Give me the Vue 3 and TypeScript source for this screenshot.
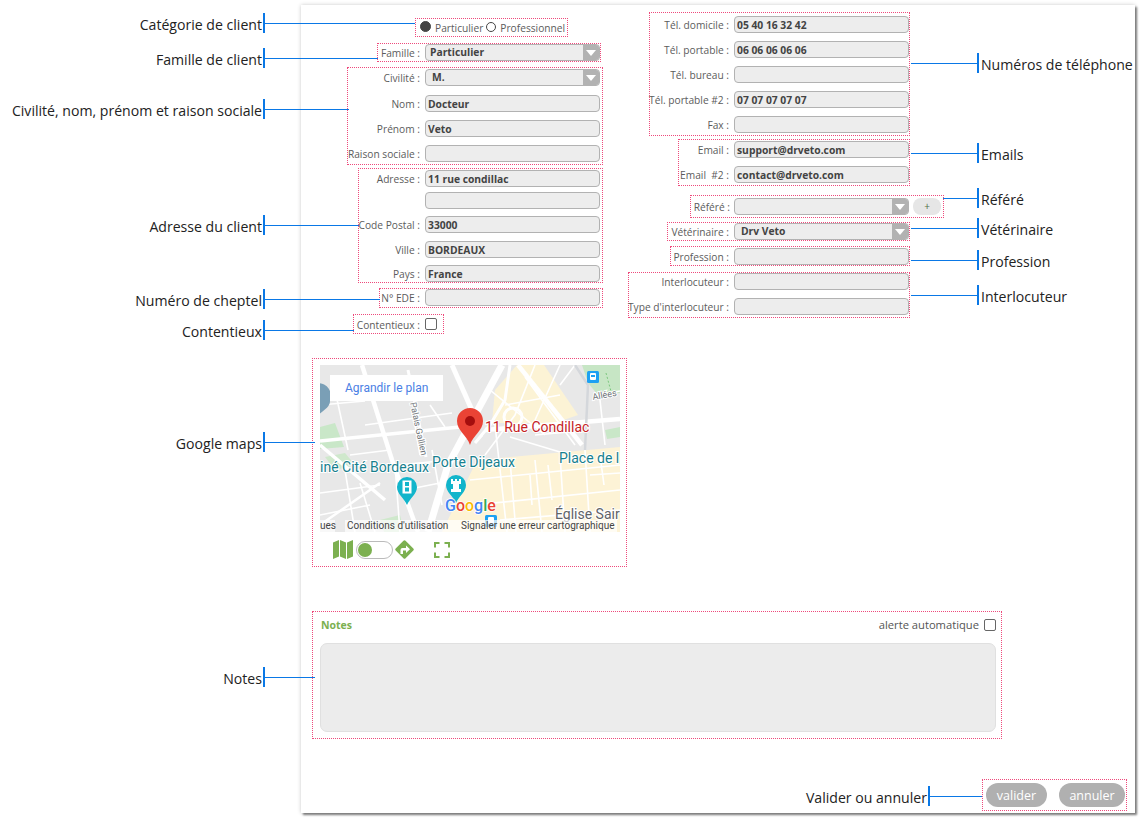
<script setup lang="ts">
interface Row {
  label: string
  value: string
  kind: 'input' | 'select'
  gap?: number
  addon?: boolean
}
interface Group {
  cls: string
  rows: Row[]
}
interface Callout {
  text: string
  y: number
  line: number
  side: 'left' | 'right'
  start?: number
}

const input = (label: string, value = '', gap = 0): Row => ({ label, value, kind: 'input', gap })
const select = (label: string, value = '', gap = 0, addon = false): Row => ({ label, value, kind: 'select', gap, addon })

const leftGroups: Group[] = [
  { cls: 'g-famille', rows: [select('Famille :', 'Particulier')] },
  {
    cls: 'g-civilite',
    rows: [select('Civilité :', 'M.'), input('Nom :', 'Docteur', 9), input('Prénom :', 'Veto', 8), input('Raison sociale :', '', 8)],
  },
  {
    cls: 'g-adresse',
    rows: [
      input('Adresse :', '11 rue condillac'),
      input('', '', 5),
      input('Code Postal :', '33000', 7),
      input('Ville :', 'BORDEAUX', 8),
      input('Pays :', 'France', 7),
    ],
  },
  { cls: 'g-ede', rows: [input('N° EDE :')] },
]

const rightGroups: Group[] = [
  {
    cls: 'g-tel',
    rows: [
      input('Tél. domicile :', '05 40 16 32 42'),
      input('Tél. portable :', '06 06 06 06 06', 8),
      input('Tél. bureau :', '', 8),
      input('Tél. portable #2 :', '07 07 07 07 07', 8),
      input('Fax :', '', 8),
    ],
  },
  { cls: 'g-email', rows: [input('Email :', 'support@drveto.com'), input('Email  #2 :', 'contact@drveto.com', 8)] },
  { cls: 'g-refere', rows: [select('Référé :', '', 0, true)] },
  { cls: 'g-veto', rows: [select('Vétérinaire :', 'Drv Veto')] },
  { cls: 'g-profession', rows: [input('Profession :')] },
  { cls: 'g-interlocuteur', rows: [input('Interlocuteur :'), input("Type d'interlocuteur :", '', 8)] },
]

const callouts: Callout[] = [
  { text: 'Catégorie de client', y: 23, line: 150, side: 'left' },
  { text: 'Famille de client', y: 58, line: 113, side: 'left' },
  { text: 'Civilité, nom, prénom et raison sociale', y: 109, line: 84, side: 'left' },
  { text: 'Adresse du client', y: 225, line: 94, side: 'left' },
  { text: 'Numéro de cheptel', y: 299, line: 115, side: 'left' },
  { text: 'Contentieux', y: 330, line: 89, side: 'left' },
  { text: 'Google maps', y: 442, line: 50, side: 'left' },
  { text: 'Notes', y: 677, line: 50, side: 'left' },
  { text: 'Numéros de téléphone', y: 63, line: 66, side: 'right', start: 911 },
  { text: 'Emails', y: 153, line: 66, side: 'right', start: 911 },
  { text: 'Référé', y: 198, line: 34, side: 'right', start: 943 },
  { text: 'Vétérinaire', y: 228, line: 66, side: 'right', start: 911 },
  { text: 'Profession', y: 260, line: 66, side: 'right', start: 911 },
  { text: 'Interlocuteur', y: 295, line: 66, side: 'right', start: 911 },
]

const calloutStyle = (c: Callout) =>
  c.side === 'left' ? { top: `${c.y - 10}px`, left: '0' } : { top: `${c.y - 10}px`, left: `${c.start}px` }
</script>

<template>
  <div class="page">
    <div class="sheet">
      <div class="columns">
        <div class="col col-left">
          <div class="group g-radio">
            <span class="radio checked"></span><span class="radio-label">Particulier</span>
            <span class="radio"></span><span class="radio-label">Professionnel</span>
          </div>

          <div v-for="g in leftGroups" :key="g.cls" class="group grid" :class="g.cls">
            <template v-for="(r, i) in g.rows" :key="i">
              <label :style="{ marginTop: `${r.gap}px` }">{{ r.label }}</label>
              <div v-if="r.kind === 'select'" class="select" :style="{ marginTop: `${r.gap}px` }">
                <span>{{ r.value }}</span><i class="arrow"></i>
              </div>
              <input v-else class="field" readonly :value="r.value" :style="{ marginTop: `${r.gap}px` }" />
            </template>
          </div>

          <div class="group grid g-contentieux">
            <label>Contentieux :</label>
            <input type="checkbox" class="check" />
          </div>
        </div>

        <div class="col col-right">
          <div v-for="g in rightGroups" :key="g.cls" class="group grid" :class="g.cls">
            <template v-for="(r, i) in g.rows" :key="i">
              <label :style="{ marginTop: `${r.gap}px` }">{{ r.label }}</label>
              <div v-if="r.kind === 'select'" class="select" :style="{ marginTop: `${r.gap}px` }">
                <span>{{ r.value }}</span><i class="arrow"></i>
              </div>
              <input v-else class="field" readonly :value="r.value" :style="{ marginTop: `${r.gap}px` }" />
              <button v-if="r.addon" class="add">+</button>
            </template>
          </div>
        </div>
      </div>

      <div class="group map-box">
        <svg class="map" width="300" height="167" viewBox="0 0 300 167">
          <rect width="300" height="167" fill="#e8e8e8" />
          <!-- quartiers jaunes -->
          <path d="M197 0 L224 0 L258 50 L235 58 L172 58 L175 25 Z" fill="#fcf3d5" />
          <path d="M157 95 L300 82 L300 167 L122 167 L140 130 Z" fill="#fdf3d6" />
          <!-- espaces verts -->
          <path d="M262 0 L300 0 L300 28 L278 30 L268 18 Z" fill="#c7e6c5" />
          <path d="M0 62 L15 58 L24 82 L0 84 Z" fill="#c9e7c8" />
          <path d="M5 92 L25 88 L35 100 L15 105 Z" fill="#cfe8cc" />
          <path d="M60 155 L80 150 L84 167 L64 167 Z" fill="#cfe8cc" />
          <path d="M285 65 L300 62 L300 72 L287 74 Z" fill="#c9e7c8" />
          <!-- petites rues -->
          <g fill="none" stroke="#fff" stroke-width="1.6">
            <path d="M0 40 L45 36 M15 25 L28 85 M45 60 L132 48 M60 30 L90 25 M85 35 L120 32 M110 40 L125 62" />
            <path d="M0 128 L60 120 M0 150 L50 140 M25 105 L35 167 M40 118 L55 167 M75 100 L80 167" />
            <path d="M85 125 L120 118 M112 85 L122 140 M95 60 L100 90 M30 90 L70 85 M78 100 L120 96" />
            <path d="M215 0 L195 50 L165 90 M240 0 L215 55 M185 40 L240 30 M170 25 L225 70 M205 12 L255 80" />
            <path d="M175 60 L187 167 M190 95 L196 167 M215 95 L222 167 M240 90 L245 167 M265 85 L270 167 M255 0 L240 20" />
            <path d="M150 115 L300 100 M155 140 L300 125 M180 155 L300 145 M210 110 L212 140 M228 100 L232 135 M280 90 L284 120" />
            <path d="M275 30 L300 26 M280 35 L285 80 M270 110 L300 108 M215 70 L260 66 M190 72 L250 90" />
          </g>
          <!-- grands axes -->
          <g fill="none" stroke="#fff">
            <path d="M182 0 L128 100 L108 167" stroke-width="7" />
            <path d="M132 0 L155 52" stroke-width="5" />
            <path d="M42 0 L72 95 L98 167" stroke-width="4.5" />
            <path d="M0 76 L140 62" stroke-width="3.5" />
            <path d="M165 65 L300 54" stroke-width="4.5" />
            <path d="M88 5 L106 92" stroke-width="3" />
            <path d="M0 80 L65 135" stroke-width="3.5" />
            <path d="M0 160 L60 118" stroke-width="2.5" />
            <path d="M198 0 L262 80" stroke-width="4.5" />
            <path d="M162 70 L155 78 L170 60 L185 35 L190 0" stroke-width="3" />
            <circle cx="193" cy="52" r="9" stroke-width="3" />
          </g>
          <path d="M255 0 L268 20 L265 85" fill="none" stroke="#d4d7db" stroke-width="2.5" />
          <path d="M286 8 L292 30" fill="none" stroke="#7bc77e" stroke-width="1" stroke-dasharray="2 2" />

          <!-- repères -->
          <path d="M-14 36 A13 13 0 1 1 10 36 C10 42 4 45 -2 50 C-8 45 -14 42 -14 36 Z" fill="#7a9fb6" />
          <g>
            <path d="M77 122 A10 10 0 1 1 97 122 C97 129 90 133 87 140 C84 133 77 129 77 122 Z" fill="#12b5cb" />
            <rect x="82.5" y="115.5" width="9" height="13" fill="#fff" />
            <path d="M85 117 h4 v4 h-4 Z M85 122.5 h4 v4 h-4 Z" fill="#12b5cb" />
          </g>
          <g>
            <path d="M126 120 A10 10 0 1 1 146 120 C146 127 139 131 136 138 C133 131 126 127 126 120 Z" fill="#12b5cb" />
            <path d="M131 114 h2 v2 h2 v-2 h2 v2 h2 v-2 h2 v5 h-2 v5 h2 v3 h-10 v-3 h2 v-5 h-2 Z" fill="#fff" />
          </g>
          <g>
            <rect x="267" y="6" width="12" height="12" rx="1.5" fill="#1da1f2" />
            <rect x="270" y="8" width="6" height="7" rx="1" fill="#fff" />
            <rect x="271" y="10" width="4" height="2" fill="#1da1f2" />
          </g>
          <g>
            <rect x="165" y="150" width="12" height="12" rx="1.5" fill="#1da1f2" />
            <rect x="168" y="152" width="6" height="7" rx="1" fill="#fff" />
          </g>
          <path d="M137 56 A13 13 0 1 1 163 56 C163 66 153 70 150 80 C147 70 137 66 137 56 Z" fill="#ea4335" />
          <circle cx="150" cy="56" r="5" fill="#a50e0e" />

          <!-- libellés -->
          <g class="map-text" paint-order="stroke" stroke="#fff" stroke-width="2">
            <text x="165" y="67" font-size="14" fill="#c5221f">11 Rue Condillac</text>
            <text x="0" y="107" font-size="14" fill="#17808e">iné Cité Bordeaux</text>
            <text x="112" y="102" font-size="14" fill="#17808e">Porte Dijeaux</text>
            <text x="239" y="98" font-size="14" fill="#17808e">Place de l</text>
            <text x="235" y="154" font-size="14" fill="#5f6368">Église Sair</text>
            <text x="273" y="35" font-size="9" fill="#70757a" transform="rotate(-10 273 35)">Allées</text>
            <text x="90" y="38" font-size="9" fill="#70757a" transform="rotate(78 90 38)">Palais Gallien</text>
            <text x="125" y="146" font-size="16" font-weight="500" stroke-width="1.5">
              <tspan fill="#4285f4">G</tspan><tspan fill="#ea4335">o</tspan><tspan fill="#fbbc05">o</tspan><tspan fill="#4285f4">g</tspan><tspan fill="#34a853">l</tspan><tspan fill="#ea4335">e</tspan>
            </text>
          </g>
          <rect x="25" y="155" width="272" height="12" fill="#fff" opacity="0.7" />
          <rect x="0" y="155" width="15" height="12" fill="#fff" opacity="0.7" />
          <g class="map-text" font-size="10" fill="#444">
            <text x="0" y="164">ues</text>
            <text x="27" y="164">Conditions d'utilisation</text>
            <text x="141" y="164">Signaler une erreur cartographique</text>
          </g>
          <rect x="10" y="10" width="113" height="26" fill="#fff" />
          <text class="map-text" x="25" y="27" font-size="12" fill="#4a80e4">Agrandir le plan</text>
        </svg>

        <div class="map-tools">
          <svg width="20" height="19" viewBox="0 0 20 19">
            <path d="M0 2.5 L6 0 V16.5 L0 19 Z M7 0 L13 2.5 V19 L7 16.5 Z M14 2.5 L20 0 V16.5 L14 19 Z" fill="#7cb050" />
          </svg>
          <span class="toggle"><i></i></span>
          <svg width="21" height="21" viewBox="0 0 21 21">
            <rect x="3.5" y="3.5" width="14" height="14" rx="1.5" fill="#7cb050" transform="rotate(45 10.5 10.5)" />
            <path d="M6.5 15 V11 Q6.5 9 8.5 9 H12 V6.5 L16 10.2 L12 14 V11.5 H9 V15 Z" fill="#fff" />
          </svg>
          <svg class="expand" width="16" height="16" viewBox="0 0 16 16">
            <path d="M1 5.5 V1 H5.5 M10.5 1 H15 V5.5 M15 10.5 V15 H10.5 M5.5 15 H1 V10.5" fill="none" stroke="#7cb050" stroke-width="2" />
          </svg>
        </div>
      </div>

      <div class="group notes-box">
        <div class="notes-head">
          <strong>Notes</strong>
          <span class="alert">alerte automatique <input type="checkbox" class="check" /></span>
        </div>
        <textarea class="notes" readonly></textarea>
      </div>

      <div class="group actions">
        <button class="btn">valider</button>
        <button class="btn">annuler</button>
      </div>
    </div>

    <!-- Annotations de la capture -->
    <div v-for="c in callouts" :key="c.text" class="callout" :class="c.side" :style="calloutStyle(c)">
      <template v-if="c.side === 'left'">
        <span class="callout-text">{{ c.text }}</span>
        <i class="tick"></i>
        <i class="line" :style="{ width: `${c.line}px` }"></i>
      </template>
      <template v-else>
        <i class="line" :style="{ width: `${c.line}px` }"></i>
        <i class="tick"></i>
        <span class="callout-text">{{ c.text }}</span>
      </template>
    </div>

    <div class="callout bottom">
      <span class="callout-text">Valider ou annuler</span>
      <i class="tick"></i>
      <i class="line"></i>
    </div>
  </div>
</template>

<style>
html,
body {
  margin: 0;
  background: #fff;
}
</style>

<style scoped>
.page {
  position: relative;
  box-sizing: border-box;
  width: 1146px;
  height: 824px;
  padding: 5px 11px 11px 301px;
  overflow: hidden;
  font-family: 'Open Sans', 'Noto Sans', sans-serif;
}

.sheet {
  display: flex;
  flex-direction: column;
  height: 100%;
  background: #fff;
  box-shadow: 2px 2px 2px #7d7d7d, 0 0 4px #ccc;
}

.columns {
  display: flex;
  height: 330px;
  flex: none;
}

.col {
  display: flex;
  flex-direction: column;
  align-items: flex-end;
  flex: none;
}

.col-left {
  width: 302px;
  padding-top: 13px;
}

.col-right {
  width: 307px;
  padding-top: 7px;
}

/* --- blocs en pointillés --- */
.group {
  box-sizing: border-box;
  border: 1px dotted #ee4a7c;
}

.grid {
  display: grid;
  grid-template-columns: minmax(0, 1fr) 175px;
  column-gap: 5px;
  align-items: center;
}

label {
  justify-self: end;
  height: 17px;
  font-size: 10.2px;
  line-height: 19px;
  color: #5c5c5c;
  white-space: pre;
}

.field,
.select {
  box-sizing: border-box;
  width: 175px;
  height: 17px;
  margin: 0;
  border: 1px solid #b2b2b2;
  border-radius: 4px;
  background: #ededed;
  font-family: inherit;
  font-size: 10.3px;
  font-weight: 700;
  color: #434343;
  outline: none;
}

.field {
  padding: 0 2px;
}

.select {
  position: relative;
  overflow: hidden;
  padding-left: 6px;
  line-height: 15px;
}

.arrow {
  position: absolute;
  top: -1px;
  right: -1px;
  width: 17px;
  height: 17px;
  background: #b2b2b2;
}

.arrow::after {
  content: '';
  position: absolute;
  top: 6px;
  left: 3px;
  border-left: 5.5px solid transparent;
  border-right: 5.5px solid transparent;
  border-top: 6px solid #fff;
}

.check {
  appearance: none;
  box-sizing: border-box;
  width: 12px;
  height: 12px;
  margin: 0;
  border: 1px solid #666;
  border-radius: 2px;
  background: #fff;
}

.g-radio {
  display: flex;
  align-items: center;
  width: 153px;
  height: 19px;
  margin-right: 35px;
  padding-left: 4px;
  font-size: 10.2px;
  color: #5c5c5c;
}

.radio {
  box-sizing: border-box;
  flex: none;
  width: 10px;
  height: 10px;
  margin-top: -2px;
  border: 1px solid #444;
  border-radius: 50%;
  background: #fff;
}

.radio.checked {
  width: 11px;
  height: 11px;
  background: #444;
}

.radio-label {
  margin: 0 3px 0 4px;
}

.g-famille {
  width: 224px;
  margin: 6px 2px 0 0;
}

.g-famille .select {
  padding-left: 4px;
}

.g-civilite {
  width: 256px;
  margin-top: 5px;
  padding: 1px 2px 2px 0;
}

.g-adresse {
  width: 245px;
  margin-top: 3px;
  padding: 1px 2px 0 0;
}

.g-ede {
  width: 224px;
  margin-top: 5px;
  padding: 0 2px 1px 0;
}

.g-contentieux {
  grid-template-columns: minmax(0, 1fr) 12px;
  align-self: flex-start;
  width: 91px;
  height: 20px;
  margin: 6px 0 0 52px;
  padding-right: 6px;
}

.g-tel {
  width: 261px;
  padding-top: 3px;
  padding-bottom: 2px;
}

.g-email {
  width: 232px;
  margin-top: 3px;
  padding: 1px 0 2px;
}

.g-refere {
  width: 254px;
  grid-template-columns: minmax(0, 1fr) 175px 28px;
  column-gap: 4px;
  margin: 9px -34px 0 0;
  padding: 2px 2px 2px 0;
}

.g-veto {
  width: 243px;
  margin-top: 4px;
}

.g-profession {
  width: 240px;
  margin-top: 5px;
  padding-top: 1px;
}

.g-interlocuteur {
  width: 282px;
  margin-top: 6px;
  padding-bottom: 2px;
}

.add {
  width: 28px;
  height: 17px;
  padding: 0;
  border: 0;
  border-radius: 8px;
  background: #e6e6e6;
  color: #4f6f45;
  font-family: inherit;
  font-size: 10px;
  line-height: 17px;
}

/* --- Carte --- */
.map-box {
  flex: none;
  width: 315px;
  height: 209px;
  margin: 23px 0 0 11px;
  padding: 6px 0 0 7px;
}

.map {
  display: block;
}

.map-text {
  font-family: Roboto, sans-serif;
}

.map-tools {
  display: flex;
  align-items: center;
  margin: 7px 0 0 13px;
}

.toggle {
  position: relative;
  box-sizing: border-box;
  width: 37px;
  height: 18px;
  margin: 0 1px 0 3px;
  border: 1px solid #bbb;
  border-radius: 9px;
}

.toggle i {
  position: absolute;
  top: 1px;
  left: 1px;
  width: 14px;
  height: 14px;
  border-radius: 50%;
  background: #7cb050;
}

.expand {
  margin-left: 19px;
}

/* --- Notes --- */
.notes-box {
  flex: none;
  display: flex;
  flex-direction: column;
  width: 690px;
  height: 128px;
  margin: 44px 0 0 11px;
  padding: 0 5px 0 7px;
}

.notes-head {
  display: flex;
  align-items: center;
  justify-content: space-between;
  height: 25px;
  margin-bottom: 6px;
}

.notes-head strong {
  padding-left: 1px;
  font-size: 10.5px;
  color: #7cb050;
}

.alert {
  display: flex;
  align-items: center;
  gap: 5px;
  font-size: 11.2px;
  color: #555;
}

.notes {
  box-sizing: border-box;
  display: block;
  width: 676px;
  height: 89px;
  margin: 0;
  padding: 4px;
  border: 1px solid #e0e0e0;
  border-radius: 7px;
  background: #ececec;
  outline: none;
  resize: none;
}

/* --- Boutons --- */
.actions {
  display: flex;
  align-items: center;
  gap: 12px;
  align-self: flex-end;
  height: 32px;
  margin: auto 8px 2px 0;
  padding: 0 1px 0 3px;
}

.btn {
  height: 24px;
  padding: 0;
  border: 0;
  border-radius: 12px;
  background: #b0b0b0;
  color: #fff;
  font-family: inherit;
  font-size: 12.5px;
}

.btn:first-child {
  width: 61px;
}

.btn:last-child {
  width: 66px;
}

/* --- Annotations --- */
.callout {
  position: absolute;
  display: flex;
  align-items: center;
  height: 20px;
  font-size: 14.1px;
  color: #222;
  white-space: nowrap;
}

.callout-text {
  padding-top: 2px;
}

.callout.left .callout-text {
  box-sizing: border-box;
  width: 263px;
  padding-right: 1px;
  text-align: right;
}

.callout.right .callout-text {
  margin-left: 2px;
}

.tick {
  flex: none;
  width: 2px;
  height: 20px;
  background: #0a78e6;
}

.line {
  flex: none;
  height: 1px;
  background: #0a78e6;
}

.callout.bottom {
  top: 786px;
  left: 0;
}

.callout.bottom .callout-text {
  box-sizing: border-box;
  width: 928px;
  padding-right: 1px;
  text-align: right;
}

.callout.bottom .line {
  width: 52px;
}
</style>
